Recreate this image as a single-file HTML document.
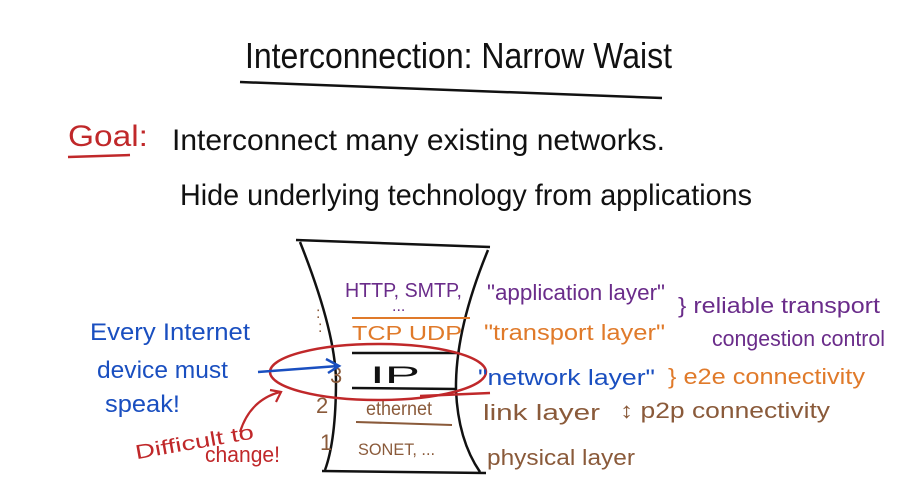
<!DOCTYPE html>
<html><head><style>
html,body{margin:0;padding:0;background:#fff;width:904px;height:484px;overflow:hidden}
svg text{font-family:"Liberation Sans",sans-serif}
</style></head><body>
<svg width="904" height="484" viewBox="0 0 904 484" xmlns="http://www.w3.org/2000/svg">
<rect width="904" height="484" fill="#fff"/>
<g fill="#111">
<text x="245" y="68" font-size="36" textLength="427" lengthAdjust="spacingAndGlyphs">Interconnection: Narrow Waist</text>
<text x="172" y="150" font-size="30" textLength="493" lengthAdjust="spacingAndGlyphs">Interconnect many existing networks.</text>
<text x="180" y="205" font-size="30" textLength="572" lengthAdjust="spacingAndGlyphs">Hide underlying technology from applications</text>
<text x="370" y="383" font-size="24" textLength="50" lengthAdjust="spacingAndGlyphs">IP</text>
</g>
<path d="M240 82 L662 98" stroke="#111" stroke-width="2.5" fill="none"/>
<text x="68" y="146" font-size="30" fill="#c0282a" textLength="80" lengthAdjust="spacingAndGlyphs">Goal:</text>
<path d="M68 157 L130 155" stroke="#c0282a" stroke-width="2.5"/>
<!-- hourglass -->
<g stroke="#111" stroke-width="2.5" fill="none">
<path d="M296 240 L490 247"/>
<path d="M300 242 Q335 330 336 380 Q336 440 325 470"/>
<path d="M488 250 Q455 330 456 390 Q458 440 480 472"/>
<path d="M322 471 L486 473"/>
<path d="M352 353 L460 353"/>
<path d="M352 388 L456 389"/>
</g>
<text x="345" y="297" font-size="20" fill="#6a2c8a" textLength="117" lengthAdjust="spacingAndGlyphs">HTTP, SMTP,</text>
<text x="392" y="311" font-size="16" fill="#6a2c8a">...</text>
<path d="M352 318 L470 318" stroke="#e07a2a" stroke-width="2"/>
<text x="352" y="340" font-size="20" fill="#e07a2a" textLength="110" lengthAdjust="spacingAndGlyphs">TCP UDP</text>
<text x="330" y="383" font-size="22" fill="#8a5a3a">3</text>
<ellipse cx="378" cy="372" rx="108" ry="28" stroke="#c0282a" stroke-width="2.5" fill="none"/>
<path d="M420 396 L490 393" stroke="#c0282a" stroke-width="2.5"/>
<text x="316" y="413" font-size="22" fill="#8a5a3a">2</text>
<text x="366" y="415" font-size="19" fill="#8a5a3a" textLength="66" lengthAdjust="spacingAndGlyphs">ethernet</text>
<path d="M356 422 L452 425" stroke="#8a5a3a" stroke-width="2"/>
<text x="320" y="450" font-size="22" fill="#8a5a3a">1</text>
<text x="358" y="455" font-size="17" fill="#8a5a3a" textLength="77" lengthAdjust="spacingAndGlyphs">SONET, ...</text>
<text x="316" y="318" font-size="16" fill="#8a5a3a">:</text>
<text x="318" y="332" font-size="16" fill="#8a5a3a">:</text>
<!-- right labels -->
<text x="487" y="300" font-size="22" fill="#6a2c8a" textLength="178" lengthAdjust="spacingAndGlyphs">"application layer"</text>
<text x="484" y="340" font-size="22" fill="#e07a2a" textLength="181" lengthAdjust="spacingAndGlyphs">"transport layer"</text>
<text x="478" y="385" font-size="22" fill="#1a4fc0" textLength="177" lengthAdjust="spacingAndGlyphs">"network layer"</text>
<text x="483" y="420" font-size="22" fill="#8a5a3a" textLength="117" lengthAdjust="spacingAndGlyphs">link layer</text>
<text x="487" y="465" font-size="22" fill="#8a5a3a" textLength="148" lengthAdjust="spacingAndGlyphs">physical layer</text>
<text x="678" y="313" font-size="22" fill="#6a2c8a" textLength="202" lengthAdjust="spacingAndGlyphs">} reliable transport</text>
<text x="712" y="346" font-size="22" fill="#6a2c8a" textLength="173" lengthAdjust="spacingAndGlyphs">congestion control</text>
<text x="668" y="384" font-size="22" fill="#e07a2a" textLength="197" lengthAdjust="spacingAndGlyphs">} e2e connectivity</text>
<text x="620" y="418" font-size="22" fill="#8a5a3a" textLength="210" lengthAdjust="spacingAndGlyphs">↕ p2p connectivity</text>
<!-- left -->
<text x="90" y="340" font-size="24" fill="#1a4fc0" textLength="160" lengthAdjust="spacingAndGlyphs">Every Internet</text>
<text x="97" y="378" font-size="24" fill="#1a4fc0" textLength="131" lengthAdjust="spacingAndGlyphs">device must</text>
<text x="105" y="412" font-size="24" fill="#1a4fc0" textLength="75" lengthAdjust="spacingAndGlyphs">speak!</text>
<path d="M258 372 L338 366 M326 359 L339 366 L328 373" stroke="#1a4fc0" stroke-width="2.5" fill="none"/>
<g transform="rotate(-10 200 445)">
<text x="135" y="448" font-size="20" fill="#c0282a" textLength="120" lengthAdjust="spacingAndGlyphs">Difficult to</text>
</g>
<text x="205" y="462" font-size="22" fill="#c0282a" textLength="75" lengthAdjust="spacingAndGlyphs">change!</text>
<path d="M240 432 Q250 400 280 392 M270 390 L281 392 L276 402" stroke="#c0282a" stroke-width="2.2" fill="none"/>
</svg>
</body></html>
